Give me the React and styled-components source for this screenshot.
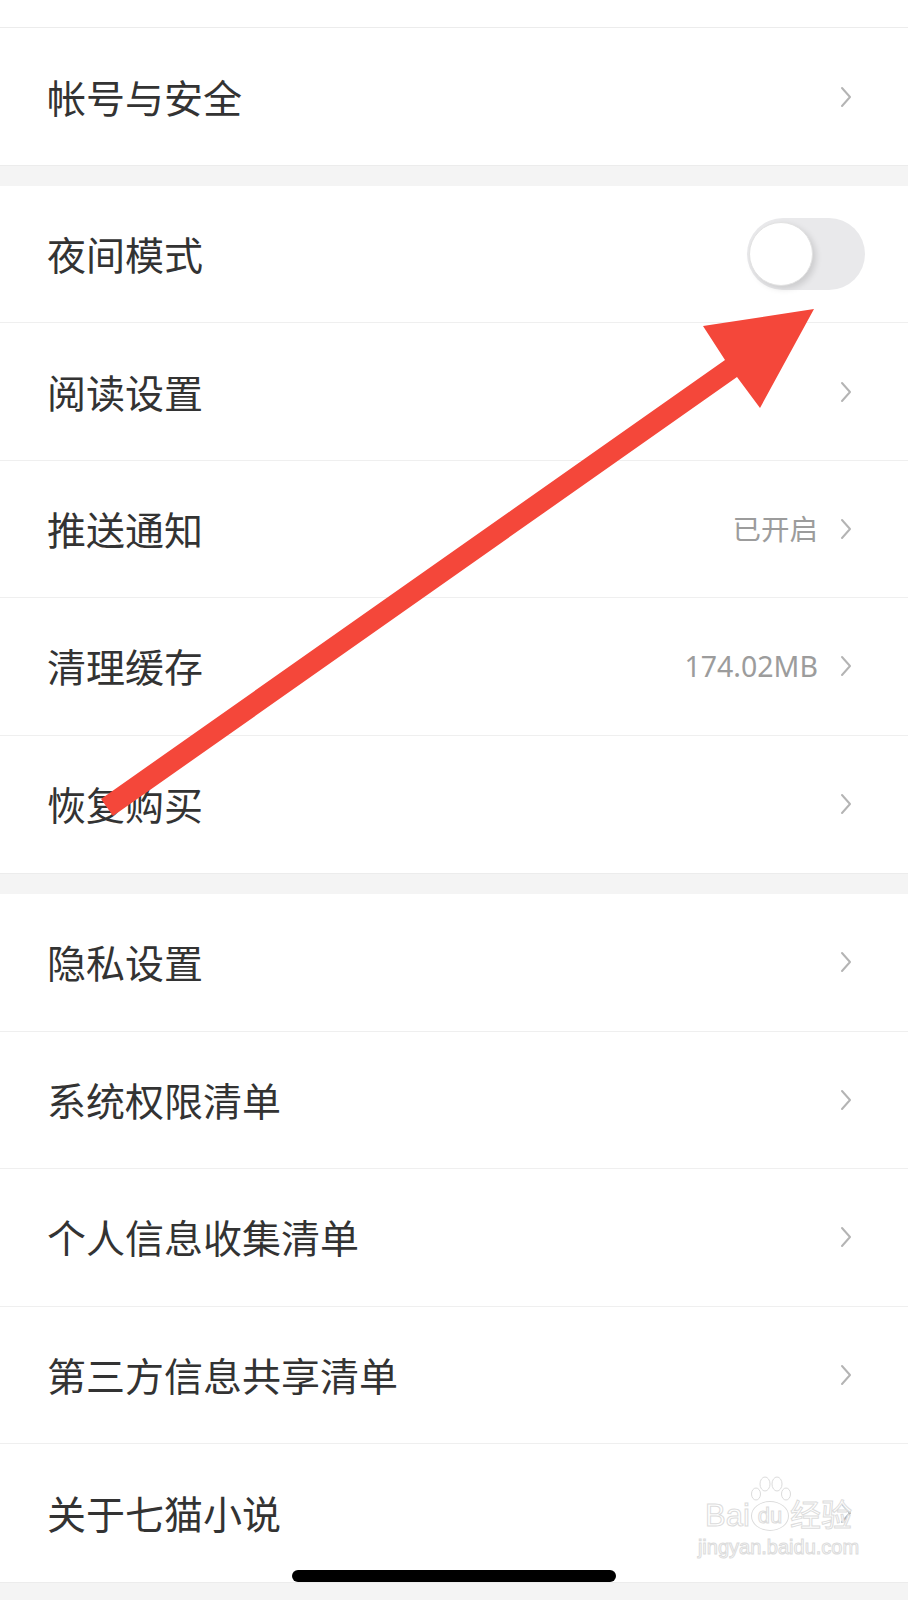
import React from 'react';
import styled, { createGlobalStyle } from 'styled-components';

const GlobalStyle = createGlobalStyle`
  html, body {
    margin: 0;
    padding: 0;
    background: #f4f4f4;
  }
  * {
    box-sizing: border-box;
  }
`;

const Page = styled.div`
  position: relative;
  width: 908px;
  height: 1600px;
  overflow: hidden;
  background: #f4f4f4;
  font-family: "Noto Sans", "Noto Sans CJK SC", sans-serif;
`;

const TopStrip = styled.div`
  height: 28px;
  background: #fff;
  border-bottom: 1px solid #ececec;
`;

const Section = styled.div`
  background: #fff;
  margin-bottom: ${({ gap }) => gap}px;
  border-bottom: 1px solid #ececec;
`;

const Row = styled.div`
  display: flex;
  align-items: center;
  height: ${({ h }) => h}px;
  padding: 0 56px 0 47px;
  border-bottom: ${({ last }) => (last ? 'none' : '1px solid #efefef')};
`;

const Label = styled.div`
  flex: 1;
  font-size: 39px;
  color: #333;
  line-height: 1;
  padding-top: 1px;
`;

const Value = styled.div`
  font-size: 28.5px;
  color: #9c9c9c;
  margin-right: 22px;
  line-height: 1;
`;

const Track = styled.div`
  position: relative;
  width: 118px;
  height: 72px;
  margin-right: -13px;
  border-radius: 36px;
  background: #e9e9eb;
  display: flex;
  align-items: center;
  padding-left: 2px;
`;

const Knob = styled.div`
  width: 64px;
  height: 64px;
  border-radius: 50%;
  background: #fff;
  border: 1px solid #e2e2e2;
  box-shadow: 3px 3px 6px rgba(0, 0, 0, 0.13);
`;

const Overlay = styled.svg`
  position: absolute;
  left: 0;
  top: 0;
  pointer-events: none;
`;

const Watermark = styled.div`
  position: absolute;
  left: 696px;
  top: 1500px;
  width: 165px;
  display: flex;
  flex-direction: column;
  align-items: center;
  color: #fff;
  -webkit-text-stroke: 1px #dcdcdc;
  pointer-events: none;
`;

const Brand = styled.div`
  display: flex;
  align-items: flex-end;
  font-family: "Liberation Sans", "Noto Sans CJK SC", sans-serif;
  font-size: 31px;
  line-height: 1;
`;

const Paw = styled.span`
  position: relative;
  display: inline-flex;
  align-items: center;
  justify-content: center;
  width: 38px;
  height: 30px;
  margin: 0 1px;
  font-size: 22px;
  border: 1px solid #dcdcdc;
  border-radius: 50%;
`;

const Toes = styled.svg`
  position: absolute;
  left: -2px;
  top: -26px;
`;

const Domain = styled.div`
  margin-top: 6px;
  font-family: "Liberation Sans Narrow", "Liberation Sans", sans-serif;
  font-size: 20px;
  line-height: 1;
`;

const HomeBar = styled.div`
  position: absolute;
  left: 50%;
  bottom: 18px;
  width: 324px;
  height: 12px;
  margin-left: -162px;
  border-radius: 6px;
  background: #000;
`;

const Chevron = () => (
  <svg width="12" height="22" viewBox="0 0 12 22">
    <polyline points="2,2 10,11 2,20" fill="none" stroke="#b4b4b4" strokeWidth="2" strokeLinecap="round" strokeLinejoin="round" />
  </svg>
);

const sections = [
  { gap: 20, h: 137, rows: [{ label: '帐号与安全' }] },
  {
    gap: 20,
    h: 137.4,
    rows: [
      { label: '夜间模式', toggle: true },
      { label: '阅读设置' },
      { label: '推送通知', value: '已开启' },
      { label: '清理缓存', value: '174.02MB' },
      { label: '恢复购买' },
    ],
  },
  {
    gap: 0,
    h: 137.6,
    rows: [
      { label: '隐私设置' },
      { label: '系统权限清单' },
      { label: '个人信息收集清单' },
      { label: '第三方信息共享清单' },
      { label: '关于七猫小说' },
    ],
  },
];

const App = () => {
  return (
    <Page>
      <GlobalStyle />
      <TopStrip />
      {sections.map((section, i) => (
        <Section key={i} gap={section.gap}>
          {section.rows.map((row, j) => (
            <Row key={row.label} h={section.h} last={j === section.rows.length - 1}>
              <Label>{row.label}</Label>
              {row.value && <Value>{row.value}</Value>}
              {row.toggle ? (
                <Track>
                  <Knob />
                </Track>
              ) : (
                <Chevron />
              )}
            </Row>
          ))}
        </Section>
      ))}

      <Watermark>
        <Brand>
          Bai
          <Paw>
            <Toes width="42" height="26" viewBox="0 0 42 26">
              <g fill="#fff" stroke="#dcdcdc" strokeWidth="1">
                <ellipse cx="6" cy="18" rx="4.5" ry="6" />
                <ellipse cx="15" cy="8" rx="5" ry="7" />
                <ellipse cx="27" cy="8" rx="5" ry="7" />
                <ellipse cx="36" cy="18" rx="4.5" ry="6" />
              </g>
            </Toes>
            du
          </Paw>
          经验
        </Brand>
        <Domain>jingyan.baidu.com</Domain>
      </Watermark>

      <Overlay width="908" height="1600" viewBox="0 0 908 1600">
        <polygon
          points="101,799 725,360 703,326 814,309 760,408 737,377 113,816"
          fill="#f4473a"
        />
      </Overlay>

      <HomeBar />
    </Page>
  );
};

export default App;
